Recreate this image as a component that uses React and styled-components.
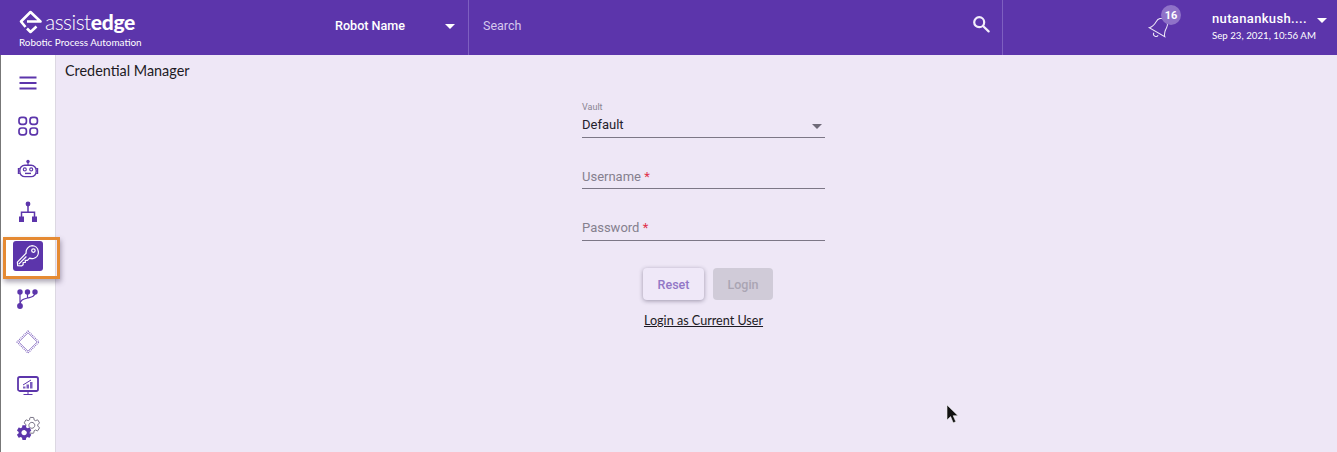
import React from 'react';
import styled, { createGlobalStyle } from 'styled-components';

const GlobalStyle = createGlobalStyle`
  html, body { margin: 0; padding: 0; height: 100%; background: #eee7f6; overflow: hidden; }
  * { box-sizing: border-box; }
`;

const GEAR = 'M19.14 12.94c.04-.3.06-.61.06-.94 0-.32-.02-.64-.07-.94l2.03-1.58c.18-.14.23-.41.12-.61l-1.92-3.32c-.12-.22-.37-.29-.59-.22l-2.39.96c-.5-.38-1.03-.7-1.62-.94l-.36-2.54c-.04-.24-.24-.41-.48-.41h-3.84c-.24 0-.43.17-.47.41l-.36 2.54c-.59.24-1.13.57-1.62.94l-2.39-.96c-.22-.08-.47 0-.59.22L2.74 8.87c-.12.21-.08.47.12.61l2.03 1.58c-.05.3-.09.63-.09.94s.02.64.07.94l-2.03 1.58c-.18.14-.23.41-.12.61l1.92 3.32c.12.22.37.29.59.22l2.39-.96c.5.38 1.03.7 1.62.94l.36 2.54c.05.24.24.41.48.41h3.84c.24 0 .44-.17.47-.41l.36-2.54c.59-.24 1.13-.56 1.62-.94l2.39.96c.22.08.47 0 .59-.22l1.92-3.32c.12-.22.07-.47-.12-.61l-2.01-1.58zM12 15.6c-1.98 0-3.6-1.62-3.6-3.6s1.62-3.6 3.6-3.6 3.6 1.62 3.6 3.6-1.62 3.6-3.6 3.6z';

const Page = styled.div`
  width: 1337px;
  height: 452px;
  display: flex;
  flex-direction: column;
  position: relative;
  overflow: hidden;
`;

// HEADER
const Header = styled.header`
  height: 55px;
  flex: none;
  display: flex;
  background: #5c35ab;
  color: #fff;
`;

const Brand = styled.div`
  width: 320px;
  padding: 9px 0 0 19px;
`;

const LogoRow = styled.div`
  display: flex;
  align-items: center;
  height: 25px;
`;

const LogoText = styled.span`
  font-family: "Lato", sans-serif;
  font-size: 21px;
  font-weight: 300;
  letter-spacing: -0.5px;
  margin-left: 2px;
  b { font-weight: 900; letter-spacing: -0.3px; }
`;

const Tagline = styled.div`
  font-family: "Lato", sans-serif;
  font-size: 9.9px;
  font-weight: 400;
  margin-top: 2px;
`;

const RobotSelect = styled.div`
  width: 148px;
  padding: 0 13px 4px 15px;
  display: flex;
  align-items: center;
  justify-content: space-between;
  font-family: "Roboto", sans-serif;
  font-size: 12.6px;
  font-weight: 500;
`;

const Caret = styled.span`
  width: 0;
  height: 0;
  margin-top: ${p => p.$top || 2}px;
  border-left: 5px solid transparent;
  border-right: 5px solid transparent;
  border-top: 5px solid ${p => p.$color || '#fff'};
`;

const SearchBox = styled.div`
  width: 535px;
  padding: 0 12px 4px 14px;
  display: flex;
  align-items: center;
  justify-content: space-between;
  border-left: 1px solid #7e5fc0;
  border-right: 1px solid #7e5fc0;
  font-family: "Roboto", sans-serif;
  font-size: 12.5px;
  color: #d6c8ee;
  svg { margin-bottom: 4px; }
`;

const Notifications = styled.div`
  width: 209px;
  display: flex;
  padding: 7px 0 0 143px;
  position: relative;
`;

const Badge = styled.span`
  position: absolute;
  left: 158px;
  top: 5px;
  width: 20px;
  height: 20px;
  border-radius: 50%;
  background: #8f72c8;
  color: #fff;
  font-family: "Roboto", sans-serif;
  font-size: 11px;
  font-weight: 700;
  display: flex;
  align-items: center;
  justify-content: center;
`;

const UserBox = styled.div`
  flex: 1;
  padding-top: 10px;
`;

const UserName = styled.div`
  display: flex;
  align-items: center;
  gap: 10px;
  font-family: "Roboto", sans-serif;
  font-size: 13px;
  font-weight: 500;
  letter-spacing: 0.35px;
  line-height: 17px;
`;

const UserDate = styled.div`
  font-family: "Lato", sans-serif;
  font-size: 9.7px;
  font-weight: 400;
  margin-top: 2px;
`;

// BODY
const Body = styled.div`
  flex: 1;
  display: flex;
  min-height: 0;
`;

const Sidebar = styled.nav`
  width: 56px;
  flex: none;
  background: #fff;
  border-left: 1px solid #777;
  border-right: 1px solid #dcd8e2;
  padding-top: 6px;
  display: flex;
  flex-direction: column;
`;

const NavItem = styled.div`
  height: 43.25px;
  flex: none;
  display: flex;
  align-items: center;
  justify-content: center;
  padding-right: 1px;
  position: relative;
`;

const ActiveTile = styled.div`
  width: 30px;
  height: 30px;
  margin-top: 1px;
  border-radius: 3px;
  background: #5c35ab;
  display: flex;
  align-items: center;
  justify-content: center;
`;

const Highlight = styled.div`
  position: absolute;
  left: 2px;
  top: 3px;
  width: 57px;
  height: 42px;
  border: 3px solid #e58a33;
  box-shadow: 1px 3px 5px rgba(70, 60, 90, 0.45);
  z-index: 2;
`;

const Main = styled.main`
  flex: 1;
  background: #eee7f6;
  padding: 8px 0 0 9px;
`;

const Title = styled.h1`
  margin: 0;
  font-family: "Lato", sans-serif;
  font-size: 14.4px;
  font-weight: 400;
  line-height: 16px;
  color: #1d1a24;
`;

const Form = styled.form`
  width: 243px;
  margin: 15px 0 0 517px;
  display: flex;
  flex-direction: column;
`;

const Field = styled.div`
  height: ${p => p.$height}px;
  border-bottom: 1px solid #7c7786;
  display: flex;
  flex-direction: column;
  justify-content: flex-end;
  padding-bottom: ${p => p.$pad || 3}px;
  font-family: "Roboto", sans-serif;
`;

const SmallLabel = styled.label`
  font-size: 9px;
  line-height: 11px;
  color: #8a8592;
  margin-bottom: 4px;
`;

const SelectValue = styled.div`
  display: flex;
  align-items: center;
  justify-content: space-between;
  font-size: 13px;
  line-height: 16px;
  color: #24212b;
  padding: 0 3px 1px 0;
`;

const Placeholder = styled.div`
  font-size: 13px;
  line-height: 16px;
  color: #85808e;
  span { color: #e0314b; }
`;

const Buttons = styled.div`
  display: flex;
  justify-content: center;
  gap: 9px;
  margin-top: 27px;
  padding-left: 9px;
`;

const Button = styled.button`
  height: 32px;
  width: ${p => p.$width}px;
  border: 0;
  border-radius: 4px;
  padding: 0;
  font-family: "Roboto", sans-serif;
  font-size: 12.5px;
  font-weight: 500;
  color: ${p => (p.disabled ? '#aaa5b3' : '#9277c6')};
  background: ${p => (p.disabled ? '#d0cbd8' : '#efe8f8')};
  box-shadow: ${p => (p.disabled ? 'none' : '0 1px 4px rgba(60, 50, 80, 0.45)')};
`;

const LoginLink = styled.a`
  align-self: center;
  margin-top: 13px;
  font-family: "Lato", sans-serif;
  font-size: 12.6px;
  line-height: 16px;
  color: #1d1a24;
  text-decoration: underline;
`;

const Cursor = styled.svg`
  position: absolute;
  left: 946px;
  top: 404px;
`;

// ICONS
const Icon = ({ children, fill = 'none', size = 24 }) => (
  <svg width={size} height={size} viewBox="0 0 24 24" fill={fill} stroke="#5c35ab" strokeWidth="1.6">
    {children}
  </svg>
);

const MenuIcon = () => (
  <Icon>
    <path d="M3.5 6.5h17M3.5 12h17M3.5 17.5h17" strokeWidth="1.8" />
  </Icon>
);

const GridIcon = () => (
  <Icon>
    <rect x="3" y="3.4" width="7.4" height="6.9" rx="2.6" strokeWidth="1.7" />
    <rect x="14" y="3.4" width="7.4" height="6.9" rx="2.6" strokeWidth="1.7" />
    <rect x="3" y="14" width="7.4" height="6.9" rx="2.6" strokeWidth="1.7" />
    <rect x="14" y="14" width="7.4" height="6.9" rx="2.6" strokeWidth="1.7" />
  </Icon>
);

const RobotIcon = () => (
  <Icon>
    <circle cx="12" cy="4.5" r="1.7" fill="#5c35ab" stroke="none" />
    <path d="M12 5v3.5" strokeWidth="1.2" />
    <rect x="3.8" y="8.2" width="16.4" height="11.4" rx="5" strokeWidth="1.4" />
    <path d="M3.8 11.5H2.4v5h1.4M20.2 11.5h1.4v5h-1.4" strokeWidth="1.2" />
    <circle cx="8.8" cy="12.4" r="1.5" strokeWidth="1.1" />
    <circle cx="15.2" cy="12.4" r="1.5" strokeWidth="1.1" />
    <path d="M9 16.4h6" strokeWidth="1.4" />
  </Icon>
);

const OrgIcon = () => (
  <Icon>
    <circle cx="12" cy="4" r="2.4" fill="#5c35ab" stroke="none" />
    <path d="M12 5v7M5.5 17v-4.8h13V17" strokeWidth="1.5" />
    <rect x="3" y="16.5" width="5" height="5.5" fill="#5c35ab" stroke="none" />
    <rect x="16" y="16.5" width="5" height="5.5" fill="#5c35ab" stroke="none" />
  </Icon>
);

const KeyIcon = () => (
  <svg width="26" height="26" viewBox="0 0 24 24" fill="none" stroke="#fff" strokeWidth="1.15" strokeLinejoin="round">
    <path d="M15.5 2.5a6 6 0 0 1 1.6 11.8 6 6 0 0 1-3.6-.3l-2 2h-2v2h-2v2l-1.5 1.2-3.5-.2-.3-3.4 8.1-8.2a6 6 0 0 1 5.7-6.9z" />
    <circle cx="17" cy="7" r="1.6" />
    <path d="M3.5 19.5l7-7" />
  </svg>
);

const BranchIcon = () => (
  <Icon>
    <circle cx="4" cy="5" r="2.7" fill="#5c35ab" stroke="none" />
    <circle cx="11.5" cy="5" r="2.7" fill="#5c35ab" stroke="none" />
    <circle cx="19" cy="5" r="2.7" fill="#5c35ab" stroke="none" />
    <circle cx="4" cy="19" r="2.9" fill="#5c35ab" stroke="none" />
    <path d="M4 6v13M4 18c0-5 3-6 7.5-7 4-.8 7.5-1 7.5-6M11.5 5v6" strokeWidth="1.2" />
  </Icon>
);

const ChipIcon = () => (
  <svg width="24" height="24" viewBox="0 0 24 24" fill="none" stroke="#8a70c4">
    <rect x="5.6" y="5.6" width="12.8" height="12.8" transform="rotate(45 12 12)" strokeWidth="0.7" />
    <rect x="4.2" y="4.2" width="15.6" height="15.6" transform="rotate(45 12 12)" strokeWidth="1.3" strokeDasharray="1 1" />
  </svg>
);

const MonitorIcon = () => (
  <Icon>
    <rect x="2" y="4" width="20" height="14" rx="1.8" strokeWidth="1.8" />
    <path d="M12 18v3M7.5 21.5h9" strokeWidth="1" />
    <path d="M7 15.5v-2h2.5v2zM10.5 15.5v-4H13v4zM14 15.5V9h2.5v6.5z" fill="#7d5fc0" stroke="none" />
    <path d="M7 12l8-5" strokeWidth="1" />
  </Icon>
);

const GearsIcon = () => (
  <svg width="26" height="26" viewBox="0 0 26 26">
    <g transform="translate(7 -0.5) scale(0.82)">
      <path d={GEAR} fill="none" stroke="#6a6478" strokeWidth="1.1" />
    </g>
    <g transform="translate(0 7.5) scale(0.76)">
      <path d={GEAR} fill="#5c35ab" />
    </g>
  </svg>
);

const MarkIcon = () => (
  <svg width="24" height="24" viewBox="0 0 24 24" fill="none" stroke="#fff" strokeWidth="2.6" strokeLinejoin="round">
    <path d="M6.5 17L2 11.5 11.5 2l10 9.5H8" />
    <path d="M17.5 16.5L11.5 22 8 18.5" />
  </svg>
);

const SearchIcon = () => (
  <svg width="18" height="18" viewBox="0 0 18 18" fill="none" stroke="#f3eefb" strokeWidth="2.2">
    <circle cx="7.2" cy="7.2" r="5" />
    <path d="M11 11l5.6 5.4" strokeLinecap="round" />
  </svg>
);

const BellIcon = () => (
  <svg width="28" height="34" viewBox="0 0 28 34" fill="none" stroke="#efe9f8" strokeWidth="1">
    <g transform="rotate(30 14 20)">
      <path d="M5 26c2-2 3-5 3-9a6 6 0 0 1 12 0c0 4 1 7 3 9z" />
      <path d="M11.5 28a2.5 2.5 0 0 0 5 0" />
    </g>
  </svg>
);

const navIcons = [MenuIcon, GridIcon, RobotIcon, OrgIcon, null, BranchIcon, ChipIcon, MonitorIcon, GearsIcon];

const App = () => {
  return (
    <Page>
      <GlobalStyle />
      <Header>
        <Brand>
          <LogoRow>
            <MarkIcon />
            <LogoText>assist<b>edge</b></LogoText>
          </LogoRow>
          <Tagline>Robotic Process Automation</Tagline>
        </Brand>
        <RobotSelect>
          Robot Name
          <Caret />
        </RobotSelect>
        <SearchBox>
          Search
          <SearchIcon />
        </SearchBox>
        <Notifications>
          <BellIcon />
          <Badge>16</Badge>
        </Notifications>
        <UserBox>
          <UserName>nutanankush.... <Caret $top={4} /></UserName>
          <UserDate>Sep 23, 2021, 10:56 AM</UserDate>
        </UserBox>
      </Header>
      <Body>
        <Sidebar>
          {navIcons.map((NavIcon, i) => (
            <NavItem key={i}>
              {NavIcon ? <NavIcon /> : (
                <>
                  <ActiveTile><KeyIcon /></ActiveTile>
                  <Highlight />
                </>
              )}
            </NavItem>
          ))}
        </Sidebar>
        <Main>
          <Title>Credential Manager</Title>
          <Form>
            <Field $height={44} $pad={3}>
              <SmallLabel>Vault</SmallLabel>
              <SelectValue>Default <Caret $color="#6f6a78" /></SelectValue>
            </Field>
            <Field $height={51}>
              <Placeholder>Username <span>*</span></Placeholder>
            </Field>
            <Field $height={52} $pad={4}>
              <Placeholder>Password <span>*</span></Placeholder>
            </Field>
            <Buttons>
              <Button type="button" $width={61}>Reset</Button>
              <Button type="button" $width={60} disabled>Login</Button>
            </Buttons>
            <LoginLink>Login as Current User</LoginLink>
          </Form>
        </Main>
      </Body>
      <Cursor width="14" height="22" viewBox="0 0 14 22">
        <path d="M1 1v15l3.6-3.4 2.6 6.2 2.6-1.1-2.6-6H12z" fill="#111" stroke="#eee" strokeWidth="0.6" />
      </Cursor>
    </Page>
  );
};

export default App;
